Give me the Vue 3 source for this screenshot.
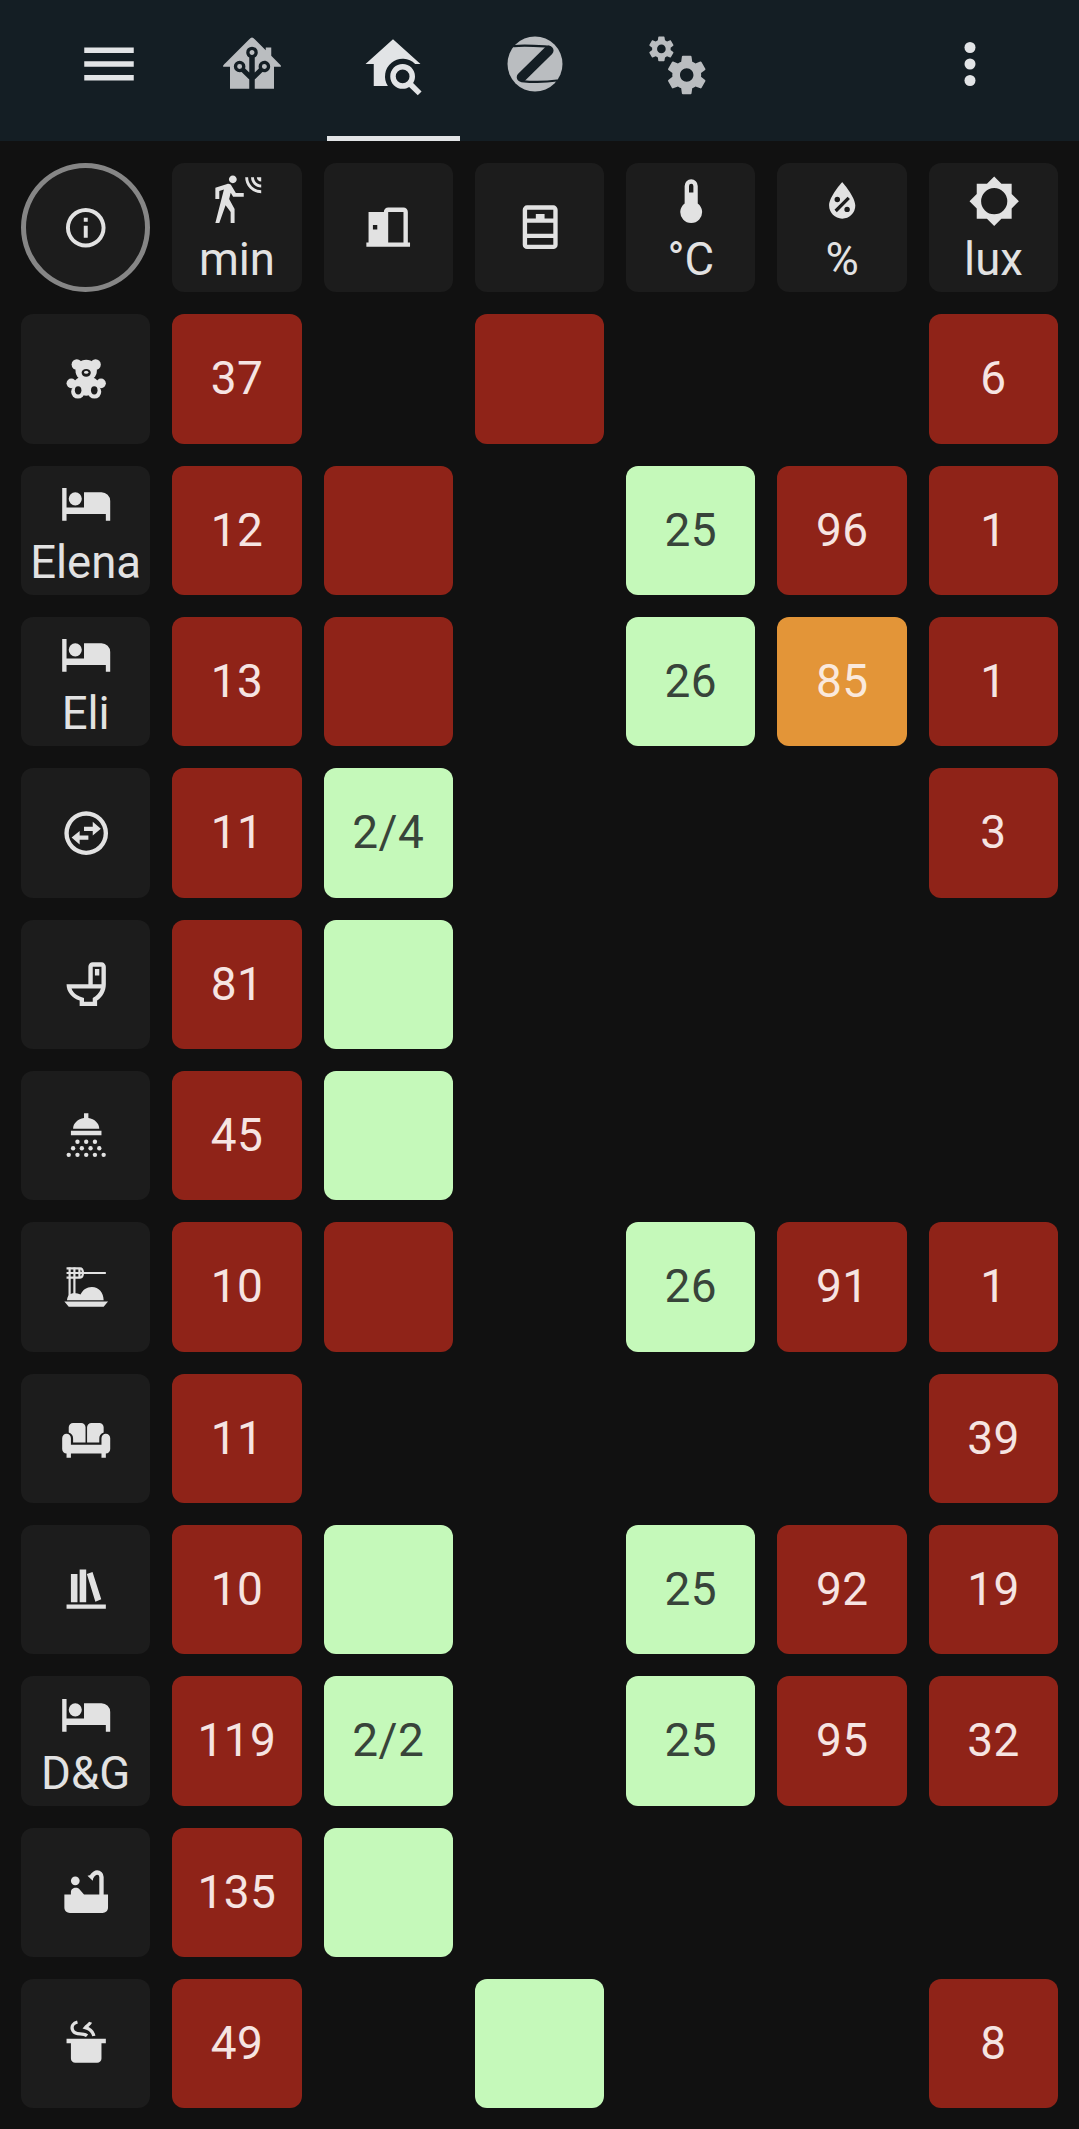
<script setup>
const icons = {
  menu: '<path d="M3,6H21V8H3V6M3,11H21V13H3V11M3,16H21V18H3V16Z"/>',
  dots: '<circle cx="12" cy="6" r="2"/><circle cx="12" cy="12" r="2"/><circle cx="12" cy="18" r="2"/>',
  home: '<path d="M21.8,13H20V21H13V17.67L15.79,14.88L16.5,15C17.66,15 18.6,14.06 18.6,12.9C18.6,11.74 17.66,10.8 16.5,10.8A2.1,2.1 0 0,0 14.4,12.9L14.5,13.61L13,15.13V9.65C13.66,9.29 14.1,8.6 14.1,7.8A2.1,2.1 0 0,0 12,5.7A2.1,2.1 0 0,0 9.9,7.8C9.9,8.6 10.34,9.29 11,9.65V15.13L9.5,13.61L9.6,12.9A2.1,2.1 0 0,0 7.5,10.8A2.1,2.1 0 0,0 5.4,12.9A2.1,2.1 0 0,0 7.5,15L8.21,14.88L11,17.67V21H4V13H2.25C1.83,13 1.42,13 1.42,12.79C1.43,12.57 1.85,12.15 2.28,11.72L11,3C11.33,2.67 11.67,2.33 12,2.33C12.33,2.33 12.67,2.67 13,3L17,7V6H19V9L21.78,11.78C22.18,12.18 22.59,12.59 22.6,12.8C22.6,13 22.2,13 21.8,13M7.5,12A0.9,0.9 0 0,1 8.4,12.9A0.9,0.9 0 0,1 7.5,13.8A0.9,0.9 0 0,1 6.6,12.9A0.9,0.9 0 0,1 7.5,12M16.5,12C17,12 17.4,12.4 17.4,12.9C17.4,13.4 17,13.8 16.5,13.8A0.9,0.9 0 0,1 15.6,12.9A0.9,0.9 0 0,1 16.5,12M12,6.9C12.5,6.9 12.9,7.3 12.9,7.8C12.9,8.3 12.5,8.7 12,8.7C11.5,8.7 11.1,8.3 11.1,7.8C11.1,7.3 11.5,6.9 12,6.9Z"/>',
  homeSearch: '<path d="M5,20V12H2L12,3L22,12H20.05A6.4,6.4 0 0,0 10.14,20Z"/><path d="M15.5,12C18,12 20,14 20,16.5C20,17.38 19.75,18.21 19.31,18.9L22.39,22L21,23.39L17.88,20.32C17.19,20.75 16.37,21 15.5,21C13,21 11,19 11,16.5C11,14 13,12 15.5,12M15.5,14A2.5,2.5 0 0,0 13,16.5A2.5,2.5 0 0,0 15.5,19A2.5,2.5 0 0,0 18,16.5A2.5,2.5 0 0,0 15.5,14"/>',
  zigbee: '<circle cx="12" cy="12" r="10"/><g fill="none" stroke="#141e24" stroke-linecap="round"><path d="M17,7.1L7.1,16.8" stroke-width="3.5"/><path d="M4.4,5.5C8,5 12.5,5.4 17,5.7M7.1,18.2C11.5,18.7 16,18.6 20,18" stroke-width="0.8"/></g>',
  cogs: '<path d="M15.9,18.45C17.25,18.45 18.35,17.35 18.35,16C18.35,14.65 17.25,13.55 15.9,13.55C14.54,13.55 13.45,14.65 13.45,16C13.45,17.35 14.54,18.45 15.9,18.45M21.1,16.68L22.58,17.84C22.71,17.95 22.75,18.13 22.66,18.29L21.26,20.71C21.17,20.86 21,20.92 20.83,20.86L19.09,20.16C18.73,20.44 18.33,20.67 17.91,20.85L17.64,22.7C17.62,22.87 17.47,23 17.3,23H14.5C14.32,23 14.18,22.87 14.15,22.7L13.89,20.85C13.46,20.67 13.07,20.44 12.71,20.16L10.96,20.86C10.81,20.92 10.62,20.86 10.54,20.71L9.14,18.29C9.05,18.13 9.09,17.95 9.22,17.84L10.7,16.68L10.65,16L10.7,15.31L9.22,14.16C9.09,14.05 9.05,13.86 9.14,13.71L10.54,11.29C10.62,11.13 10.81,11.07 10.96,11.13L12.71,11.84C13.07,11.56 13.46,11.32 13.89,11.15L14.15,9.29C14.18,9.13 14.32,9 14.5,9H17.3C17.47,9 17.62,9.13 17.64,9.29L17.91,11.15C18.33,11.32 18.73,11.56 19.09,11.84L20.83,11.13C21,11.07 21.17,11.13 21.26,11.29L22.66,13.71C22.75,13.86 22.71,14.05 22.58,14.16L21.1,15.31L21.15,16L21.1,16.68M6.69,8.07C7.56,8.07 8.26,7.37 8.26,6.5C8.26,5.63 7.56,4.92 6.69,4.92A1.58,1.58 0 0,0 5.11,6.5C5.11,7.37 5.82,8.07 6.69,8.07M10.03,6.94L11,7.68C11.07,7.75 11.09,7.87 11.03,7.97L10.13,9.53C10.08,9.63 9.96,9.67 9.86,9.63L8.74,9.18L8,9.62L7.81,10.81C7.79,10.92 7.7,11 7.59,11H5.79C5.67,11 5.58,10.92 5.56,10.81L5.4,9.62L4.64,9.18L3.5,9.63C3.41,9.67 3.3,9.63 3.24,9.53L2.34,7.97C2.28,7.87 2.31,7.75 2.39,7.68L3.34,6.94L3.31,6.5L3.34,6.06L2.39,5.32C2.31,5.25 2.28,5.13 2.34,5.03L3.24,3.47C3.3,3.37 3.41,3.33 3.5,3.37L4.63,3.82L5.4,3.38L5.56,2.19C5.58,2.08 5.67,2 5.79,2H7.59C7.7,2 7.79,2.08 7.81,2.19L8,3.38L8.74,3.82L9.86,3.37C9.96,3.33 10.08,3.37 10.13,3.47L11.03,5.03C11.09,5.13 11.07,5.25 11,5.32L10.03,6.06L10.06,6.5L10.03,6.94Z"/>',
  info: '<path d="M11,9H13V7H11M12,20C7.59,20 4,16.41 4,12C4,7.59 7.59,4 12,4C16.41,4 20,7.59 20,12C20,16.41 16.41,20 12,20M12,2A10,10 0 0,0 2,12A10,10 0 0,0 12,22A10,10 0 0,0 22,12A10,10 0 0,0 12,2M11,17H13V11H11V17Z"/>',
  motion: '<path d="M10,0.2C9,0.2 8.2,1 8.2,2C8.2,3 9,3.8 10,3.8C11,3.8 11.8,3 11.8,2C11.8,1 11,0.2 10,0.2M15.67,1A7.33,7.33 0 0,0 23,8.33V7A6,6 0 0,1 17,1H15.67M18.33,1C18.33,3.58 20.42,5.67 23,5.67V4.33C21.16,4.33 19.67,2.84 19.67,1H18.33M21,1A2,2 0 0,0 23,3V1H21M7.92,4.03C7.75,4.03 7.58,4.06 7.42,4.11L2,5.8V11H3.8V7.33L5.91,6.67L2,22H3.8L6.67,13.89L9,17V22H10.8V15.59L8.31,11.05L9.04,8.18L10.12,10H15V8.2H11.38L9.38,4.87C9.08,4.37 8.54,4.03 7.92,4.03Z"/>',
  door: '<path d="M2,21V19H3V5H10A2,2 0 0,1 12,3H19A2,2 0 0,1 21,5V19H22V21ZM12,5V19H19V5ZM5,11H7V13H5Z"/>',
  drawer: '<path d="M6,2H18A2,2 0 0,1 20,4V20A2,2 0 0,1 18,22H6A2,2 0 0,1 4,20V4A2,2 0 0,1 6,2ZM6,4V8H10V6H14V8H18V4ZM6,10V15H18V10ZM6,17V20H18V17Z"/>',
  thermometer: '<path d="M15 13V5A3 3 0 0 0 9 5V13A5 5 0 1 0 15 13M12 4A1 1 0 0 1 13 5V8H11V5A1 1 0 0 1 12 4Z"/>',
  humidity: '<path d="M12,3.25C12,3.25 6,10 6,14C6,17.32 8.69,20 12,20A6,6 0 0,0 18,14C18,10 12,3.25 12,3.25M14.47,9.97L15.53,11.03L9.53,17.03L8.47,15.97M9.75,10A1.25,1.25 0 0,1 11,11.25A1.25,1.25 0 0,1 9.75,12.5A1.25,1.25 0 0,1 8.5,11.25A1.25,1.25 0 0,1 9.75,10M14.25,14.5A1.25,1.25 0 0,1 15.5,15.75A1.25,1.25 0 0,1 14.25,17A1.25,1.25 0 0,1 13,15.75A1.25,1.25 0 0,1 14.25,14.5Z"/>',
  light: '<path d="M12,18A6,6 0 0,1 6,12A6,6 0 0,1 12,6A6,6 0 0,1 18,12A6,6 0 0,1 12,18M20,15.31L23.31,12L20,8.69V4H15.31L12,0.69L8.69,4H4V8.69L0.69,12L4,15.31V20H8.69L12,23.31L15.31,20H20V15.31Z"/>',
  bear: '<circle cx="7.7" cy="5.3" r="2.4"/><circle cx="16.3" cy="5.3" r="2.4"/><ellipse cx="12" cy="8" rx="4.9" ry="4.9"/><circle cx="5.2" cy="13.9" r="2.2"/><circle cx="18.8" cy="13.9" r="2.2"/><ellipse cx="12" cy="15" rx="6" ry="4.6"/><circle cx="8.2" cy="17.8" r="3.1"/><circle cx="15.8" cy="17.8" r="3.1"/><g fill="#1c1c1c"><ellipse cx="12" cy="9.1" rx="2.1" ry="1.8"/><ellipse cx="8.3" cy="17.1" rx="1.5" ry="1.9"/><ellipse cx="15.7" cy="17.1" rx="1.5" ry="1.9"/></g><ellipse cx="12" cy="8.8" rx="1" ry="0.7"/>',
  bed: '<path d="M19,7H11V14H3V5H1V20H3V17H21V20H23V11A4,4 0 0,0 19,7M7,13A3,3 0 0,0 10,10A3,3 0 0,0 7,7A3,3 0 0,0 4,10A3,3 0 0,0 7,13Z"/>',
  swap: '<path d="M12,2A10,10 0 1,0 12,22A10,10 0 1,0 12,2ZM12,4A8,8 0 1,1 12,20A8,8 0 1,1 12,4Z"/><path d="M15,13L18.7,10L15,6.8V9H11V11H15ZM9,11L5.3,14L9,17.2V15H13V13H9Z"/>',
  toilet: '<path d="M9,22H17V19.5C19.41,17.87 21,15.12 21,12V4A2,2 0 0,0 19,2H15C13.89,2 13,2.9 13,4V12H3C3,15.5 5.4,18.2 9,19.5V22M5.3,14H18.71C18.14,15.91 16.77,17.5 15,18.33V20H11V18.33C8.2,17.6 6,16.2 5.3,14M15,4H19V12H15V4M16,5V8H18V5H16Z"/>',
  shower: '<path d="M11,2H13V4.1C15.8,4.5 18,6.5 18,9H6C6,6.5 8.2,4.5 11,4.1ZM5,10H19V12H5Z"/><circle cx="8" cy="15" r="1"/><circle cx="12" cy="15" r="1"/><circle cx="16" cy="15" r="1"/><circle cx="6" cy="18" r="1"/><circle cx="10" cy="18" r="1"/><circle cx="14" cy="18" r="1"/><circle cx="18" cy="18" r="1"/><circle cx="4" cy="21" r="1"/><circle cx="8" cy="21" r="1"/><circle cx="12" cy="21" r="1"/><circle cx="16" cy="21" r="1"/><circle cx="20" cy="21" r="1"/>',
  pasta: '<path d="M2,18.5H22L20,21H4ZM3.2,18C3.4,16 4.4,14.8 6.5,14.8C7.6,14.8 8.6,14.9 9.4,15.4C10.4,13.2 12.2,11.9 14.6,11.9C17.8,11.9 20,14.4 20,18Z"/><path d="M4.4,3V16.5M6.6,3V16.5" fill="none" stroke="currentColor" stroke-width="1"/><path d="M3,3.4H9.2C10.2,3.4 10.5,4.4 10.5,5.5C10.5,6.6 10.2,7.6 9.2,7.6H3M3,5.5H21M8.9,3.4V7.6" fill="none" stroke="currentColor" stroke-width="1"/>',
  sofa: '<path d="M11.7,14H6V12.4A3,3 0 0,0 4,9.4V7A2,2 0 0,1 6,5H9.7A2,2 0 0,1 11.7,7ZM12.4,14H18V12.4A3,3 0 0,1 20,9.4V7A2,2 0 0,0 18,5H14.4A2,2 0 0,0 12.4,7ZM3,10A2,2 0 0,0 1,12V17A2,2 0 0,0 3,19V21H5V19H19V21H21V19A2,2 0 0,0 23,17V12A2,2 0 0,0 19,12V15H5V12A2,2 0 0,0 3,10Z"/>',
  books: '<path d="M5,5H8V18H5ZM9,3H12V18H9ZM12.3,5L14.9,4.1L18.9,16.6L16.2,17.7ZM3,19H21V21H3Z"/>',
  bath: '<circle cx="7" cy="6.8" r="2"/><path d="M2,13H5V12C5,10.8 6,10 7.2,10C8.1,10 8.6,10.3 9.1,10.9L11,13H22V19C22,20.5 20.8,21.5 19.5,21.5H4.5C3.2,21.5 2,20.5 2,19ZM12.6,4.5L15.6,3.8L15,6.8Z"/><path d="M19,13.5V5A2,2 0 0,0 17,3C15.9,3 15.2,3.9 14.4,4.9" fill="none" stroke="currentColor" stroke-width="2"/>',
  pot: '<path d="M3,10H21V12H19V19A2,2 0 0,1 17,21H7A2,2 0 0,1 5,19V12H3Z"/><path d="M8,2.3C6,2.8 5.3,4.2 5.6,5.6C6,7.2 7.4,7.7 9.2,7.7C10.6,7.7 11.6,7.9 12.4,8.6M14,2.4C13.6,3.4 12.3,4 11.6,4.9C13.4,5.4 15,6.4 15.5,8.7" fill="none" stroke="currentColor" stroke-width="1.5"/>',
}

const tabs = ['home', 'homeSearch', 'zigbee', 'cogs']
const active = 'homeSearch'

const head = (icon, label) => ({ kind: 'dark', icon, label })
const red = (value = '') => ({ kind: 'red', value })
const green = (value = '') => ({ kind: 'green', value })
const orange = (value) => ({ kind: 'orange', value })
const none = { kind: 'empty' }

const rows = [
  [{ kind: 'dark round', icon: 'info' }, head('motion', 'min'), head('door'), head('drawer'), head('thermometer', '°C'), head('humidity', '%'), head('light', 'lux')],
  [head('bear'), red('37'), none, red(), none, none, red('6')],
  [head('bed', 'Elena'), red('12'), red(), none, green('25'), red('96'), red('1')],
  [head('bed', 'Eli'), red('13'), red(), none, green('26'), orange('85'), red('1')],
  [head('swap'), red('11'), green('2/4'), none, none, none, red('3')],
  [head('toilet'), red('81'), green(), none, none, none, none],
  [head('shower'), red('45'), green(), none, none, none, none],
  [head('pasta'), red('10'), red(), none, green('26'), red('91'), red('1')],
  [head('sofa'), red('11'), none, none, none, none, red('39')],
  [head('books'), red('10'), green(), none, green('25'), red('92'), red('19')],
  [head('bed', 'D&G'), red('119'), green('2/2'), none, green('25'), red('95'), red('32')],
  [head('bath'), red('135'), green(), none, none, none, none],
  [head('pot'), red('49'), none, green(), none, none, red('8')],
]
const cells = rows.flat()
</script>

<template>
  <div class="page">
    <header class="bar">
      <button class="action"><svg class="nav-icon" viewBox="0 0 24 24" v-html="icons.menu" /></button>
      <nav class="tabs">
        <button v-for="t in tabs" :key="t" class="tab" :class="{ active: t === active }">
          <svg class="nav-icon" viewBox="0 0 24 24" v-html="icons[t]" />
        </button>
      </nav>
      <button class="action more"><svg class="nav-icon" viewBox="0 0 24 24" v-html="icons.dots" /></button>
    </header>
    <main class="grid">
      <div v-for="(c, i) in cells" :key="i" class="cell" :class="[c.kind, { labelled: c.label }]">
        <svg v-if="c.icon" class="icon" viewBox="0 0 24 24" fill-rule="evenodd" v-html="icons[c.icon]" />
        <span v-if="c.label" class="label">{{ c.label }}</span>
        <span v-if="c.value">{{ c.value }}</span>
      </div>
    </main>
  </div>
</template>

<style>
body {
  margin: 0;
  background: #111111;
}
</style>

<style scoped>
.page {
  width: 1079px;
  height: 2129px;
  overflow: hidden;
  background: #111111;
  color: #e2e2e2;
  font-family: Roboto, sans-serif;
}
.bar {
  display: flex;
  height: 141px;
  box-sizing: border-box;
  padding: 0 43px 0 43px;
  background: #141e24;
}
button {
  display: flex;
  align-items: center;
  justify-content: center;
  box-sizing: border-box;
  height: 141px;
  margin: 0;
  padding: 0 0 13px;
  border: 0;
  background: none;
  color: #e2e4e6;
}
.action {
  width: 132px;
}
.more {
  margin-left: auto;
}
.tabs {
  display: flex;
  gap: 9px;
  margin-left: 10.5px;
}
.tab {
  width: 132.5px;
  color: #babdc0;
}
.tab.active {
  padding-bottom: 8px;
  border-bottom: 5px solid #e2e4e6;
  color: #e2e4e6;
}
.nav-icon {
  width: 66px;
  height: 66px;
  fill: currentColor;
}
.grid {
  display: grid;
  grid-template-columns: repeat(7, 129.3px);
  grid-auto-rows: 129.33px;
  gap: 22px;
  padding: 22px 21px;
}
.cell {
  display: flex;
  flex-direction: column;
  align-items: center;
  justify-content: center;
  box-sizing: border-box;
  border-radius: 12px;
  font-size: 46px;
  line-height: 53px;
  letter-spacing: 0.4px;
}
.dark {
  background: #1c1c1c;
}
.round {
  border: 5px solid #868686;
  border-radius: 50%;
}
.round .icon {
  width: 47.5px;
  height: 47.5px;
}
.red {
  background: #8f2318;
  color: #f6e4e2;
}
.green {
  background: #c5f9ba;
  color: #38443a;
}
.orange {
  background: #e39538;
  color: #fae9dc;
}
.icon {
  flex: none;
  width: 52.4px;
  height: 52.4px;
  margin-left: 0.8px;
  fill: currentColor;
}
.labelled {
  justify-content: flex-start;
  padding-top: 11.5px;
}
.label {
  margin-top: 6.5px;
  font-size: 45.5px;
  letter-spacing: 0;
}
</style>
